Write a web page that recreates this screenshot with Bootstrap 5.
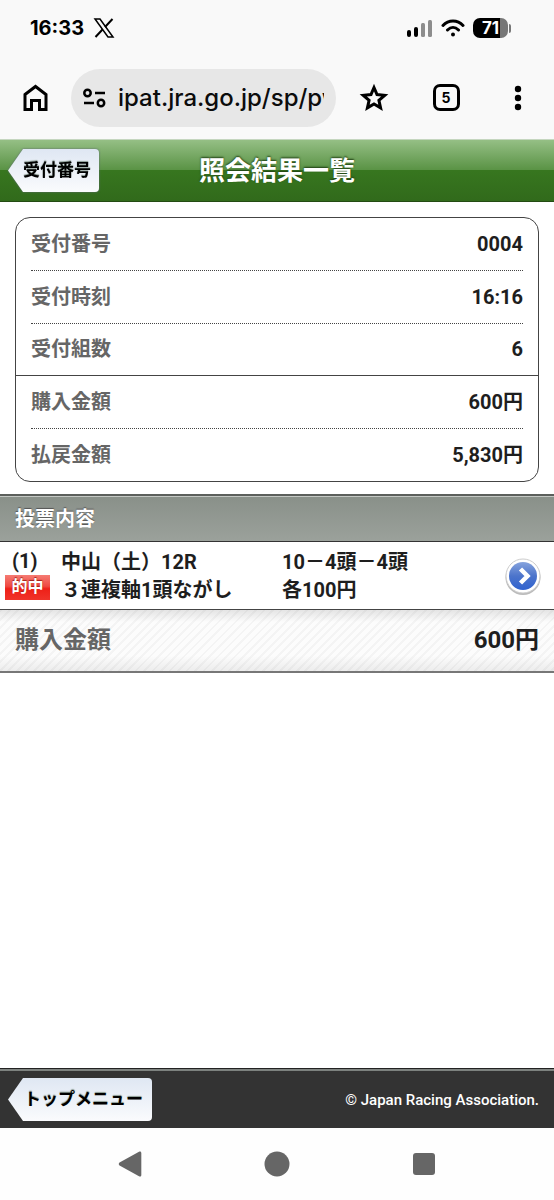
<!DOCTYPE html>
<html lang="ja">
<head>
<meta charset="utf-8">
<meta name="viewport" content="width=device-width, initial-scale=1">
<title>照会結果一覧</title>
<link href="https://cdn.jsdelivr.net/npm/bootstrap@5.3.0/dist/css/bootstrap.min.css" rel="stylesheet">
<style>
body { font-family: Roboto, "Noto Sans CJK JP", sans-serif; font-size: 20px; line-height: 28px; font-weight: 700; color: #1e1e1e; background: #fff; }
svg { display: block; flex: none; }
.browser-top { background: #f9f9f9; color: #000; }
.status-line { height: 56px; padding: 0 42px 0 30px; font-family: Inter, sans-serif; }
.clock-text { font-size: 20px; font-weight: 700; }
.power { width: 39px; height: 20px; }
.power-body { width: 35px; height: 20px; border-radius: 7px; background: linear-gradient(90deg, #000 76%, #777 76%); color: #fff; font: 700 17px/20px Inter, sans-serif; }
.power-tip { width: 2px; height: 9px; border-radius: 0 2px 2px 0; background: #777; margin-left: 1px; }
.tool-line { height: 83px; padding-left: 22px; }
.tool-line button { border: 0; background: none; padding: 0; color: #000; }
.tool-cell { width: 72px; flex: none; }
.address { height: 58px; background: #e7e7e7; padding: 0 12px; margin: 0 2px 0 22px; min-width: 0; gap: 12px; }
.address input { width: 0; border: 0; background: none; padding: 0; min-width: 0; font: 500 24px/32px Inter, sans-serif; color: #0c0c0c; outline: 0; }
.tool-line .tab-count { width: 27px; height: 27px; border: 3px solid #000; border-radius: 7px; font: 700 14px/20px Inter, sans-serif; }
.title-bar { height: 63px; background: linear-gradient(#95bf85 0, #5a9345 49%, #37761f 50%, #316a1b 100%); border-top: 1px solid #c5d6bf; border-bottom: 1px solid #234b13; }
.title-bar h1 { font-size: 26px; line-height: 36px; font-weight: 700; color: #fff; text-shadow: 0 -1px 2px #1d3d11; }
.side { flex: 1 1 0; padding-left: 8px; }
.back-shape { filter: drop-shadow(0 0 1px #5c6a70); }
.back-btn { height: 43px; border: 0; border-radius: 4px; padding: 0 8px 2px 15px; font-size: 17px; font-weight: 700; line-height: 24px; color: #000; text-shadow: 0 -1px 1px #8a9a92; background: linear-gradient(#dfe7f3, #fafbfd); clip-path: polygon(0 50%, 15px 0, 100% 0, 100% 100%, 15px 100%); }
.summary { margin: 15px 15px 12px; border: 1px solid #444; border-radius: 15px; }
.summary-row { height: 53px; padding-bottom: 1px; margin: 0 15px; border-bottom: 1px dotted #444; }
.summary-row.group-end { height: 52px; margin: 0; padding-left: 15px; padding-right: 15px; border-bottom: 1px solid #444; }
.summary-row:last-child { border-bottom: 0; height: 52px; }
.key-text { color: #666; }
.section-title { height: 48px; padding: 0 15px; font-size: 20px; line-height: 28px; font-weight: 700; color: #fff; background: linear-gradient(#899089, #9ba19b); border-top: 2px solid #5c5f5c; border-bottom: 1px solid #333; box-shadow: inset 0 1px #c4c8c4; text-shadow: 0 -1px 1px #555; }
.bet { min-height: 68px; color: #1e1e1e; text-decoration: none; border-bottom: 1px solid #444; }
.bet-no { width: 61px; flex: none; padding-bottom: 4px; }
.bet-no span:first-child { padding-left: 12px; }
.hit { width: 45px; height: 25px; margin-left: 5px; font-size: 16px; line-height: 23px; font-weight: 700; color: #fff; text-align: center; background: linear-gradient(#f57b73 0, #ef4a42 45%, #ee2018 55%, #f0332a); text-shadow: 0 -1px 1px #a02018; }
.bet-col { flex: 1 1 0; min-width: 0; white-space: nowrap; }
.bet-go { width: 51px; flex: none; }
.total { height: 63px; padding: 0 15px 2px; font-size: 24px; line-height: 32px; border-bottom: 2px solid #777; background: linear-gradient(#00000018 0, #0000 20%, #0000 75%, #00000010), repeating-linear-gradient(135deg, #f4f4f4 0 2px, #fcfcfc 2px 6px); }
.page-foot { height: 60px; padding: 2px 15px 0 8px; background: #333; border-top: 1px solid #222; box-shadow: inset 0 2px #7d827f; color: #fff; }
.page-foot .back-btn { padding-left: 16px; padding-right: 9px; }
.copy { font-size: 15px; line-height: 20px; font-weight: 500; }
.system-nav { height: 72px; padding: 0 16px; background: #fefefe; color: #666; }
.system-nav button { flex: 0 0 147px; border: 0; background: none; padding: 0; }
</style>
</head>
<body>
<div class="d-flex flex-column min-vh-100">
  <div class="browser-top">
    <div class="status-line d-flex align-items-center">
      <span class="clock-text">16:33</span>
      <svg class="ms-2" width="24" height="20" viewBox="0 0 24 20" fill="none" stroke="#000" aria-hidden="true"><path d="M3 1h5l13 18h-5z" stroke-width="1.5"/><path d="M20.500 1 13 9M10.500 11.500 3.500 19" stroke-width="2"/></svg>
      <svg class="ms-auto" width="26" height="20" viewBox="0 0 26 20" aria-hidden="true"><rect y="12" width="4" height="7" rx="2"/><rect x="7" y="9" width="4" height="10" rx="2"/><g fill="#8d8d8d"><rect x="14" y="5" width="4" height="14" rx="1.500"/><rect x="21" y="2" width="4" height="17" rx="1.500"/></g></svg>
      <svg class="mx-2" width="24" height="20" viewBox="0 0 24 20" fill="none" stroke="#000" stroke-width="3" stroke-linecap="round" aria-hidden="true"><path d="M2 7.500C7.500 1.500 16.500 1.500 22 7.500M6.500 12c3.500-3.500 7.500-3.500 11 0"/><circle cx="12" cy="16.500" r="2" fill="#000" stroke="none"/></svg>
      <div class="power d-flex align-items-center"><span class="power-body text-center">71</span><span class="power-tip"></span></div>
    </div>
    <div class="tool-line d-flex align-items-center">
      <button type="button" aria-label="ホーム"><svg width="27" height="28" viewBox="0 0 27 28" fill="none" stroke="currentColor" stroke-width="3"><path d="M3 10.500 13.500 2.500 24 10.500V25.500H17.500V16.500H9.500V25.500H3z"/></svg></button>
      <div class="address rounded-pill d-flex align-items-center flex-grow-1">
        <svg width="23" height="20" viewBox="0 0 23 20" fill="none" stroke="#000" stroke-width="2.500" aria-hidden="true"><circle cx="4.500" cy="5" r="3.200"/><path d="M12 5h10M1 15h10"/><circle cx="18" cy="15" r="3.200"/></svg>
        <input class="flex-grow-1" type="text" aria-label="アドレス" value="ipat.jra.go.jp/sp/pw">
      </div>
      <div class="tool-cell d-flex justify-content-center"><button type="button" aria-label="ブックマーク"><svg width="30" height="29" viewBox="0 0 30 29" fill="none" stroke="currentColor" stroke-width="3"><path d="M15 4.500 18 11.600 25.700 12.300 19.900 17.300 21.600 24.900 15 20.900 8.400 24.900 10.100 17.300 4.300 12.300 12 11.600z"/></svg></button></div>
      <div class="tool-cell d-flex justify-content-center"><button class="tab-count" type="button" aria-label="タブ">5</button></div>
      <div class="tool-cell d-flex justify-content-center"><button type="button" aria-label="メニュー"><svg width="8" height="26" viewBox="0 0 8 26" fill="currentColor"><circle cx="4" cy="4" r="3.200"/><circle cx="4" cy="13" r="3.200"/><circle cx="4" cy="22" r="3.200"/></svg></button></div>
    </div>
  </div>

  <header class="title-bar d-flex align-items-center">
    <div class="side back-shape"><button class="back-btn" type="button">受付番号</button></div>
    <h1 class="m-0">照会結果一覧</h1>
    <div class="side"></div>
  </header>

  <main class="flex-grow-1">
    <dl class="summary">
      <div class="summary-row d-flex align-items-center justify-content-between"><dt class="key-text">受付番号</dt><dd class="m-0">0004</dd></div>
      <div class="summary-row d-flex align-items-center justify-content-between"><dt class="key-text">受付時刻</dt><dd class="m-0">16:16</dd></div>
      <div class="summary-row group-end d-flex align-items-center justify-content-between"><dt class="key-text">受付組数</dt><dd class="m-0">6</dd></div>
      <div class="summary-row d-flex align-items-center justify-content-between"><dt class="key-text">購入金額</dt><dd class="m-0">600円</dd></div>
      <div class="summary-row d-flex align-items-center justify-content-between"><dt class="key-text">払戻金額</dt><dd class="m-0">5,830円</dd></div>
    </dl>
    <h2 class="section-title d-flex align-items-center m-0">投票内容</h2>
    <a class="bet d-flex align-items-center" href="#detail">
      <div class="bet-no d-flex flex-column"><span>(1)</span><span class="hit">的中</span></div>
      <div class="bet-col">中山（土）12R<br>３連複軸1頭ながし</div>
      <div class="bet-col">10－4頭－4頭<br>各100円</div>
      <div class="bet-go"><svg width="40" height="40" viewBox="0 0 40 40" aria-hidden="true"><defs><linearGradient id="ball" x2="0" y2="1"><stop stop-color="#86a3dd"/><stop offset=".5" stop-color="#4c74cb"/><stop offset="1" stop-color="#2f62cf"/></linearGradient></defs><circle cx="20" cy="21.500" r="17.500" fill="#777" opacity=".5"/><circle cx="20" cy="20" r="17" fill="#fff" stroke="#ccc"/><circle cx="20" cy="20" r="14" fill="url(#ball)"/><path d="m17.500 13 7 7-7 7" fill="none" stroke="#fff" stroke-width="4.500"/></svg></div>
    </a>
    <div class="total d-flex align-items-center justify-content-between"><span class="key-text">購入金額</span><span>600円</span></div>
  </main>

  <footer class="page-foot d-flex align-items-center justify-content-between">
    <button class="back-btn" type="button">トップメニュー</button>
    <span class="copy">© Japan Racing Association.</span>
  </footer>
  <nav class="system-nav d-flex align-items-center justify-content-center" aria-label="システム">
    <button type="button" aria-label="戻る"><svg class="mx-auto" width="24" height="26" viewBox="0 0 24 26" fill="#666"><path d="M21 .700c1.300-.7 2.300 0 2.300 1.300v22c0 1.300-1 2-2.300 1.300L1.500 14.500c-1-.7-1-2.300 0-3z"/></svg></button>
    <button type="button" aria-label="ホーム画面"><svg class="mx-auto" width="26" height="26" viewBox="0 0 26 26" fill="#666"><circle cx="13" cy="13" r="12.500"/></svg></button>
    <button type="button" aria-label="履歴"><svg class="mx-auto" width="24" height="24" viewBox="0 0 24 24" fill="#666"><rect x="1" y="1" width="22" height="22" rx="3"/></svg></button>
  </nav>
</div>
<script src="https://cdn.jsdelivr.net/npm/bootstrap@5.3.0/dist/js/bootstrap.bundle.min.js"></script>
</body>
</html>
